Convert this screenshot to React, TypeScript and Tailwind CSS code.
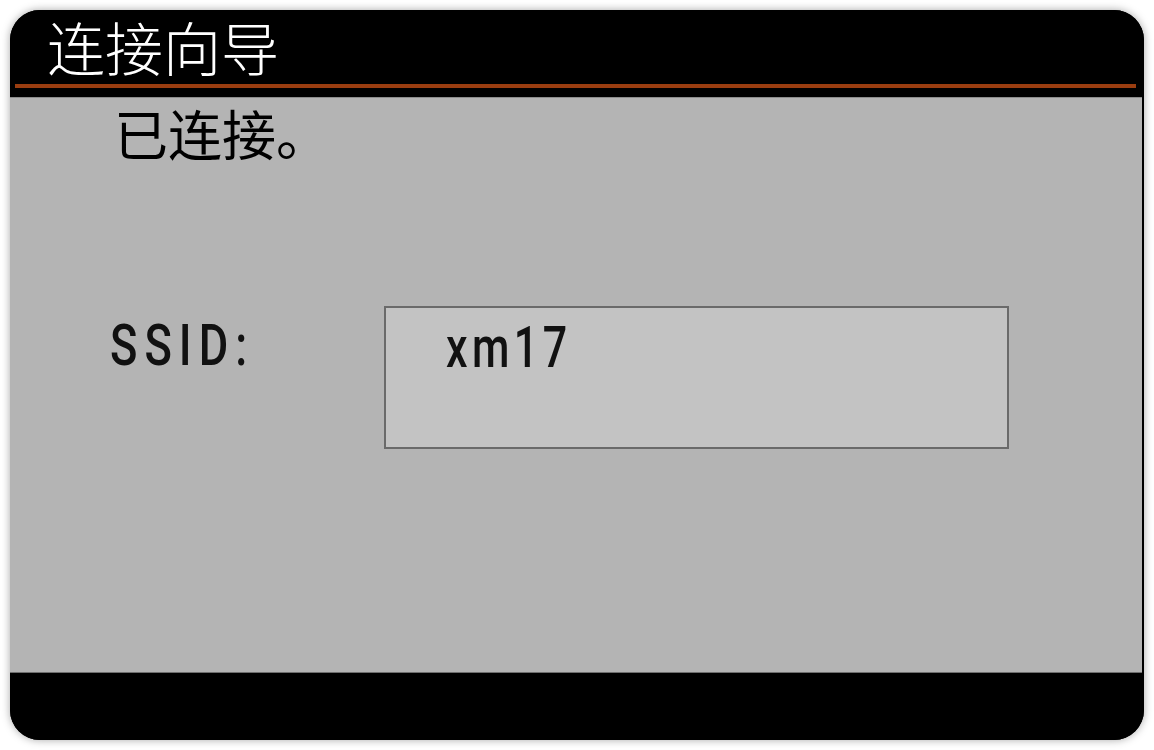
export default function App() {
  const cjk = { fontFamily: '"Noto Sans CJK SC", "Noto Sans", sans-serif' }
  const narrow = { fontFamily: 'Roboto, "Liberation Sans", sans-serif' }

  return (
    <div className="w-[1154px] h-[750px] bg-white p-[10px]">
      <div className="flex h-[730px] w-[1134px] flex-col rounded-[30px] bg-black shadow-[0_0_8px_rgba(0,0,0,0.35)]">
        {/* header */}
        <div className="flex h-[87px] shrink-0 flex-col rounded-t-[30px] bg-black">
          <div className="flex h-[74px] items-start pl-[37px]">
            <span className="text-[58px] font-light leading-[1.25] text-white" style={cjk}>
              连接向导
            </span>
          </div>
          <div className="ml-[5px] mr-[8px] h-[4px] bg-[#9a3d10]" />
        </div>

        {/* body */}
        <div className="mr-[2px] flex flex-1 flex-col border-y border-t-[#8c8c8c] border-b-[#6e6e6e] bg-[#b4b4b4]">
          <div className="pl-[104px] pt-[8px] text-[54px] leading-none text-black" style={cjk}>
            已连接。
          </div>
          <div className="mt-[146px] flex items-start pl-[100px]">
            <div className="w-[274px] pt-[10px] text-[58px] font-medium leading-none text-[#111]" style={narrow}>
              <span className="inline-block origin-left scale-x-[0.78] tracking-[9px]">SSID:</span>
            </div>
            <div className="h-[143px] w-[625px] border-2 border-[#6a6a6a] bg-[#c3c3c3] pl-[60px] pt-[10px]">
              <span className="inline-block origin-left scale-x-[0.74] text-[58px] font-medium leading-none tracking-[6px] text-[#111]" style={narrow}>
                xm17
              </span>
            </div>
          </div>
        </div>

        {/* footer */}
        <div className="h-[67px] shrink-0 rounded-b-[30px] bg-black" />
      </div>
    </div>
  )
}
